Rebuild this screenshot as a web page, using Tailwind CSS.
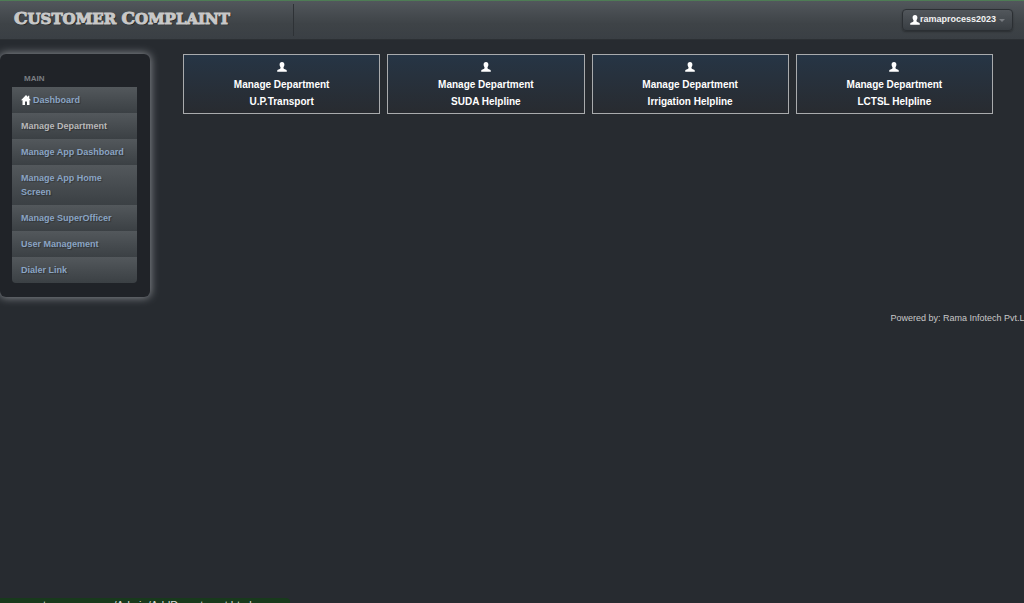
<!DOCTYPE html>
<html lang="en">
<head>
<meta charset="utf-8">
<meta name="viewport" content="width=device-width, initial-scale=1">
<title>Customer Complaint</title>
<script src="https://cdn.jsdelivr.net/npm/@tailwindcss/browser@4"></script>
</head>
<body class="flex h-screen flex-col overflow-hidden bg-[#272b30] font-['Liberation_Sans',Arial,sans-serif] text-[9px] text-[#c8c8c8]">
<svg class="hidden" aria-hidden="true">
  <symbol id="user" viewBox="0 0 10 10"><path d="M5 0c1.600 0 2.400 1 2.400 2.500 0 1.300-.5 2.100-.9 2.700v1.100c.3.500 1 .8 2 1.100.9.300 1.300.700 1.300 1.600v.8H.2V9c0-.9.400-1.300 1.300-1.600 1-.3 1.700-.6 2-1.100V5.200c-.4-.6-.9-1.400-.9-2.700C2.600 1 3.400 0 5 0z" fill="currentColor"/></symbol>
  <symbol id="home" viewBox="0 0 10 10"><path d="M5 0 0 5.200h1.500V10H4V6.500h2V10h2.500V5.200H10L8.300 3.400V.8H7v1.300z" fill="currentColor"/></symbol>
</svg>
<header class="flex h-10 shrink-0 items-center justify-between border-t border-b border-t-[#4e7c55] border-b-[#2c3034] bg-linear-to-b from-[#52575c] from-0% via-[#3e4347] via-60% to-[#3a3f44] pr-[11px] pl-3">
  <div class="flex h-8 w-[282px] items-center border-r border-[#2e3236] pb-1 pl-0.5">
    <a href="#" class="whitespace-nowrap font-['DejaVu_Serif',serif] text-[15px] leading-5 font-bold text-[#c8c8c8] [-webkit-text-stroke:1px_#c8c8c8] [text-shadow:1px_1px_1px_rgba(0,0,0,.6)]"><span class="text-[17px] leading-5">C</span>USTOMER <span class="text-[17px] leading-5">C</span>OMPLAINT</a>
  </div>
  <button class="flex h-[22px] items-center rounded border border-[#2b2f33] bg-linear-to-b from-[#52575c] to-[#393e43] px-[7px] font-bold text-[#f2f2f2] shadow-[0_1px_2px_rgba(0,0,0,.3)]">
    <svg class="size-[10px] text-white" aria-hidden="true"><use href="#user"/></svg>ramaprocess2023<span class="ml-[3px] border-x-[3px] border-t-[3px] border-x-transparent border-t-[#777b80]"></span>
  </button>
</header>
<div class="flex items-start pt-[14px]">
  <aside class="w-[150px] shrink-0 rounded-md bg-[#202328] pt-[17px] pr-[13px] pb-[14px] pl-3 shadow-[0_0_8px_1px_#85888d]">
    <h2 class="pl-3 text-[8px] leading-4 font-bold text-[#7a7e83]">MAIN</h2>
    <nav class="overflow-hidden rounded-b-sm leading-[14px] font-bold text-[#8ba5c4] [text-shadow:1px_1px_1px_rgba(0,0,0,.3)] *:bg-linear-to-b *:from-[#53585c] *:to-[#3b4044] *:px-[9px] *:py-[6px]">
      <a href="#" class="flex items-center gap-0.5"><svg class="size-[10px] text-white" aria-hidden="true"><use href="#home"/></svg>Dashboard</a>
      <a href="#" class="block text-[#b9b9b9]">Manage Department</a>
      <a href="#" class="block">Manage App Dashboard</a>
      <a href="#" class="block">Manage App Home<br>Screen</a>
      <a href="#" class="block">Manage SuperOfficer</a>
      <a href="#" class="block">User Management</a>
      <a href="#" class="block">Dialer Link</a>
    </nav>
  </aside>
  <main class="mr-[31px] ml-[33px] grid flex-1 grid-cols-4 gap-[7px] text-center text-[10px] leading-[17px] font-bold text-white *:flex *:flex-col *:items-center *:border *:border-[#a9abad] *:bg-linear-to-b *:from-[#263545] *:to-[#282b30] *:pt-[7px] *:pb-[3px]">
    <a href="#"><svg class="mb-1 size-[10px]" aria-hidden="true"><use href="#user"/></svg><span>Manage Department<br>U.P.Transport</span></a>
    <a href="#"><svg class="mb-1 size-[10px]" aria-hidden="true"><use href="#user"/></svg><span>Manage Department<br>SUDA Helpline</span></a>
    <a href="#"><svg class="mb-1 size-[10px]" aria-hidden="true"><use href="#user"/></svg><span>Manage Department<br>Irrigation Helpline</span></a>
    <a href="#"><svg class="mb-1 size-[10px]" aria-hidden="true"><use href="#user"/></svg><span>Manage Department<br>LCTSL Helpline</span></a>
  </main>
</div>
<footer class="-mr-2 mt-[13px] self-end leading-4 whitespace-nowrap">Powered by: Rama Infotech Pvt.Ltd</footer>
<div class="mt-auto h-[5px] w-[290px] shrink-0 overflow-hidden rounded-tr-sm bg-[#183a1c] pt-[3px] pl-[26px] text-[11px] leading-[9px] whitespace-nowrap text-[#dadada]">customer-process/Admin/AddDepartment.html</div>
</body>
</html>
